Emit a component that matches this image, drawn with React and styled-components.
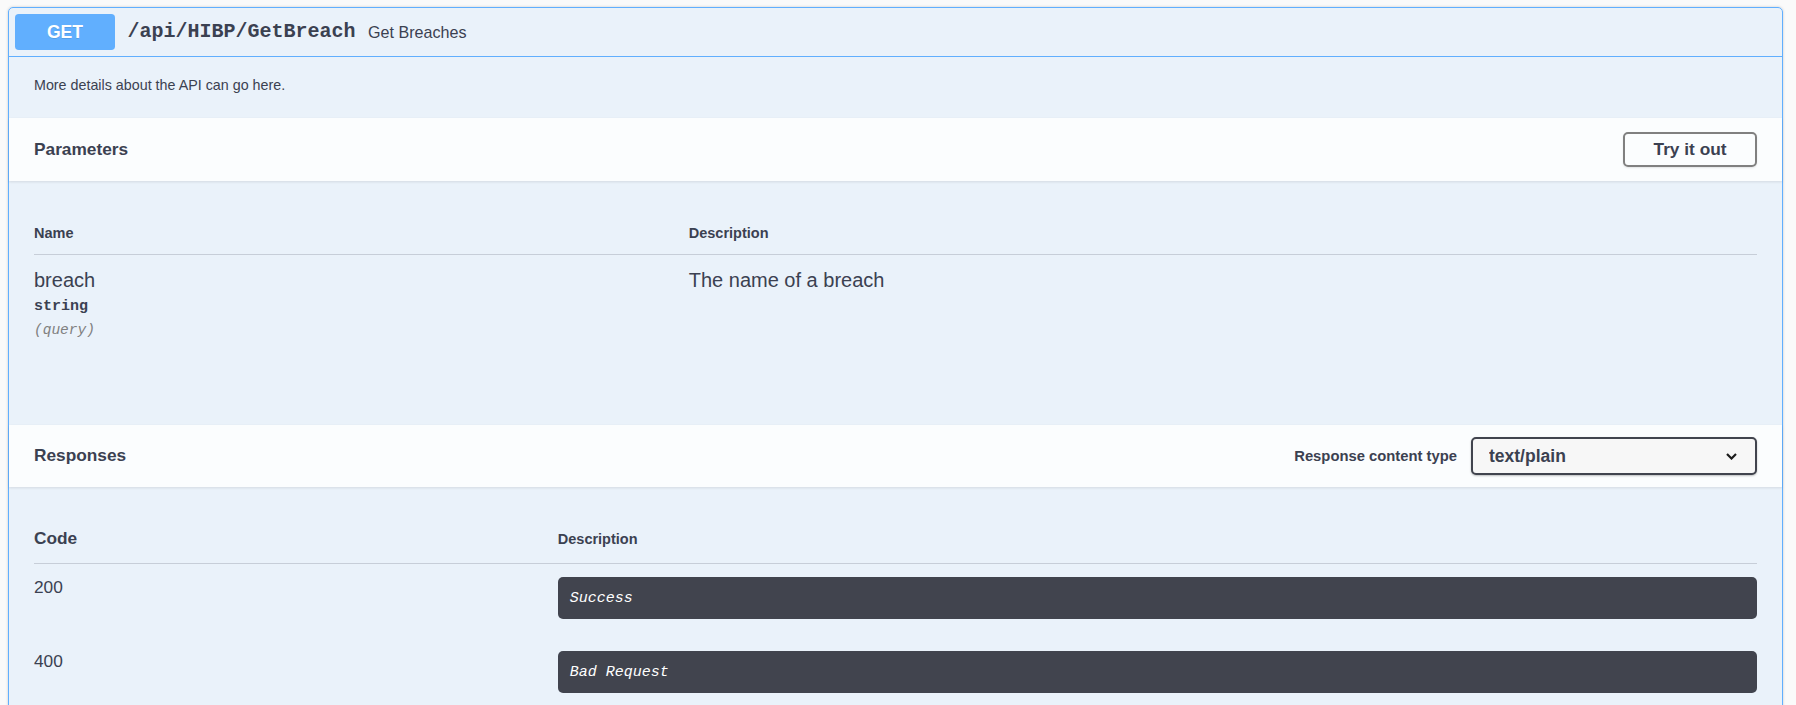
import React from "react";
import styled, { createGlobalStyle } from "styled-components";

const GlobalStyle = createGlobalStyle`
  body {
    margin: 0;
    background: #fafafa;
    font-family: "Liberation Sans", Arial, sans-serif;
    color: #3b4151;
  }
`;

const mono = `"Liberation Mono", "Courier New", monospace`;

const params = [{ name: "breach", type: "string", in: "query", description: "The name of a breach" }];

const responses = [
  { code: "200", description: "Success" },
  { code: "400", description: "Bad Request" },
];

function Chevron() {
  return (
    <Styles.Chevron width="11" height="7" viewBox="0 0 11 7">
      <path d="M1 1 L5.5 5.5 L10 1" fill="none" stroke="#1b1b1b" strokeWidth="2.2" />
    </Styles.Chevron>
  );
}

export default function App() {
  return (
    <Styles.Page>
      <GlobalStyle />
      <Styles.Opblock>
        <Styles.Summary>
          <Styles.Method>GET</Styles.Method>
          <Styles.Path>/api/HIBP/GetBreach</Styles.Path>
          <Styles.SummaryText>Get Breaches</Styles.SummaryText>
        </Styles.Summary>

        <Styles.Description>More details about the API can go here.</Styles.Description>

        <Styles.SectionHeader>
          <Styles.Title>Parameters</Styles.Title>
          <Styles.Button>Try it out</Styles.Button>
        </Styles.SectionHeader>

        <Styles.ParamsBody>
          <Styles.ParamHead>
            <Styles.ColHead>Name</Styles.ColHead>
            <Styles.ColHead>Description</Styles.ColHead>
          </Styles.ParamHead>
          {params.map((p) => (
            <Styles.ParamRow key={p.name}>
              <div>
                <Styles.ParamName>{p.name}</Styles.ParamName>
                <Styles.ParamType>{p.type}</Styles.ParamType>
                <Styles.ParamIn>({p.in})</Styles.ParamIn>
              </div>
              <Styles.ParamDesc>{p.description}</Styles.ParamDesc>
            </Styles.ParamRow>
          ))}
        </Styles.ParamsBody>

        <Styles.SectionHeader>
          <Styles.Title>Responses</Styles.Title>
          <Styles.ContentType>
            <Styles.Label>Response content type</Styles.Label>
            <Styles.SelectWrap>
              <Styles.Select defaultValue="text/plain">
                <option value="text/plain">text/plain</option>
                <option value="application/json">application/json</option>
                <option value="text/json">text/json</option>
              </Styles.Select>
              <Chevron />
            </Styles.SelectWrap>
          </Styles.ContentType>
        </Styles.SectionHeader>

        <Styles.ResponsesBody>
          <Styles.RespHead>
            <Styles.CodeHead>Code</Styles.CodeHead>
            <Styles.ColHead>Description</Styles.ColHead>
          </Styles.RespHead>
          {responses.map((r) => (
            <Styles.RespRow key={r.code}>
              <Styles.Code>{r.code}</Styles.Code>
              <Styles.Markdown>{r.description}</Styles.Markdown>
            </Styles.RespRow>
          ))}
        </Styles.ResponsesBody>
      </Styles.Opblock>
    </Styles.Page>
  );
}

const Styles = {
  Page: styled.div`
    padding: 7px 13px 20px 8px;
  `,
  Opblock: styled.div`
    border: 1px solid #61affe;
    border-radius: 5px;
    background: rgba(97, 175, 254, 0.1);
    box-shadow: 0 0 3px rgba(0, 0, 0, 0.19);
  `,
  Summary: styled.div`
    display: flex;
    align-items: center;
    padding: 6px;
    border-bottom: 1px solid #61affe;
  `,
  Method: styled.span`
    box-sizing: border-box;
    min-width: 100px;
    padding: 7.5px 0;
    line-height: 21px;
    font-size: 17.5px;
    font-weight: 700;
    text-align: center;
    color: #fff;
    background: #61affe;
    border-radius: 3.75px;
    text-shadow: 0 1px 0 rgba(0, 0, 0, 0.1);
  `,
  Path: styled.span`
    padding: 0 12.5px;
    font-family: ${mono};
    font-size: 20px;
    font-weight: 700;
    line-height: 24px;
  `,
  SummaryText: styled.span`
    font-size: 16.1px;
    line-height: 24px;
  `,
  Description: styled.p`
    margin: 0;
    padding: 17px 25px 22px;
    font-size: 14.3px;
    line-height: 22px;
  `,
  SectionHeader: styled.div`
    box-sizing: border-box;
    display: flex;
    align-items: center;
    justify-content: space-between;
    min-height: 62.5px;
    padding: 8px 25px;
    background: rgba(255, 255, 255, 0.8);
    box-shadow: 0 1.25px 2.5px rgba(0, 0, 0, 0.1);
  `,
  Title: styled.h4`
    margin: 0;
    font-size: 17.3px;
    font-weight: 700;
  `,
  Button: styled.button`
    padding: 5px 28.5px;
    border: 2px solid #808080;
    border-radius: 5px;
    background: transparent;
    box-shadow: 0 1px 2px rgba(0, 0, 0, 0.1);
    color: #3b4151;
    font-family: "Liberation Sans", Arial, sans-serif;
    font-size: 17.3px;
    font-weight: 700;
    line-height: 21px;
    cursor: pointer;
  `,
  ParamsBody: styled.div`
    box-sizing: border-box;
    min-height: 244px;
    padding: 25px 25px 0;
  `,
  ParamHead: styled.div`
    display: grid;
    grid-template-columns: 38% 1fr;
    padding: 18px 0 12px;
    border-bottom: 1px solid rgba(59, 65, 81, 0.2);
  `,
  ColHead: styled.div`
    font-size: 14.5px;
    font-weight: 700;
    line-height: 18px;
  `,
  ParamRow: styled.div`
    display: grid;
    grid-template-columns: 38% 1fr;
    padding-top: 11px;
  `,
  ParamName: styled.div`
    font-size: 20px;
    line-height: 28px;
  `,
  ParamType: styled.div`
    padding: 4px 0 5px;
    font-family: ${mono};
    font-size: 15px;
    font-weight: 700;
    line-height: 18px;
  `,
  ParamIn: styled.div`
    font-family: ${mono};
    font-size: 14.5px;
    font-style: italic;
    line-height: 18px;
    color: #808080;
  `,
  ParamDesc: styled.div`
    font-size: 20px;
    line-height: 28px;
  `,
  ContentType: styled.div`
    display: flex;
    align-items: center;
  `,
  Label: styled.span`
    margin-right: 14px;
    font-size: 14.8px;
    font-weight: 700;
  `,
  SelectWrap: styled.div`
    position: relative;
    display: flex;
  `,
  Select: styled.select`
    appearance: none;
    box-sizing: border-box;
    width: 286px;
    height: 38px;
    padding: 0 40px 0 16px;
    border: 2px solid #41444e;
    border-radius: 5px;
    background: #f7f7f7;
    box-shadow: 0 1px 2px rgba(0, 0, 0, 0.25);
    color: #3b4151;
    font-family: "Liberation Sans", Arial, sans-serif;
    font-size: 17.5px;
    font-weight: 700;
    outline: none;
  `,
  Chevron: styled.svg`
    position: absolute;
    right: 20px;
    top: 16px;
    pointer-events: none;
  `,
  ResponsesBody: styled.div`
    padding: 25px 25px 10px;
  `,
  RespHead: styled.div`
    display: grid;
    grid-template-columns: 30.4% 1fr;
    align-items: center;
    padding: 16px 0 14px;
    border-bottom: 1px solid rgba(59, 65, 81, 0.2);
  `,
  CodeHead: styled.div`
    font-size: 17.3px;
    font-weight: 700;
    line-height: 21px;
  `,
  RespRow: styled.div`
    display: grid;
    grid-template-columns: 30.4% 1fr;
    align-items: start;
    padding: 13px 0 19px;
  `,
  Code: styled.div`
    font-size: 17.3px;
    line-height: 21px;
  `,
  Markdown: styled.div`
    padding: 12.5px 12px;
    border-radius: 5px;
    background: #41444e;
    color: #fff;
    font-family: ${mono};
    font-size: 15px;
    font-style: italic;
    line-height: 17px;
  `,
};
